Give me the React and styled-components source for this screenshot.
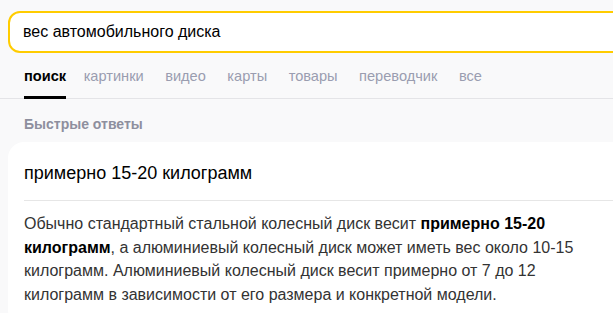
import React from 'react'
import styled, { createGlobalStyle } from 'styled-components'

const GlobalStyle = createGlobalStyle`
  html, body {
    margin: 0;
    padding: 0;
    background: #f9f9fa;
    overflow: hidden;
  }
  body {
    font-family: "Liberation Sans", Arial, sans-serif;
  }
`

const tabs = ['поиск', 'картинки', 'видео', 'карты', 'товары', 'переводчик', 'все']

function App() {
    return (
        <Page>
            <GlobalStyle />

            <SearchBox>
                <SearchText>вес автомобильного диска</SearchText>
                <ClearIcon viewBox="0 0 14 14">
                    <path d="M1 1 L13 13 M13 1 L1 13" />
                </ClearIcon>
            </SearchBox>

            <Tabs>
                {tabs.map((t, i) => (
                    <Tab key={t} active={i === 0}>{t}</Tab>
                ))}
            </Tabs>

            <SectionTitle>Быстрые ответы</SectionTitle>

            <Card>
                <AnswerTitle>примерно 15-20 килограмм</AnswerTitle>
                <Divider />
                <AnswerText>
                    Обычно стандартный стальной колесный диск весит <b>примерно 15-20 килограмм</b>, а алюминиевый колесный диск может иметь вес около 10-15 килограмм. Алюминиевый колесный диск весит примерно от 7 до 12 килограмм в зависимости от его размера и конкретной модели.
                </AnswerText>
            </Card>
        </Page>
    )
}

const Page = styled.div`
  width: 660px;
  padding: 11px 0 0 8px;
  display: flex;
  flex-direction: column;
`

const SearchBox = styled.div`
  height: 42px;
  box-sizing: border-box;
  border: 2px solid #ffcc00;
  border-radius: 12px;
  background: #fff;
  display: flex;
  align-items: center;
  padding: 0 14px 0 13px;
  justify-content: space-between;
`

const SearchText = styled.span`
  font-size: 16px;
  color: #000;
`

const ClearIcon = styled.svg`
  width: 12px;
  height: 12px;
  fill: none;
  stroke: #8a8fa3;
  stroke-width: 1.6;
`

const Tabs = styled.div`
  margin: 14px 0 0 -8px;
  padding-left: 24px;
  display: flex;
  gap: 21.5px;
  border-bottom: 1px solid #e4e4e7;
`

const Tab = styled.div`
  font-size: 14.6px;
  line-height: 18px;
  padding-bottom: 11px;
  border-bottom: 3px solid ${(p) => (p.active ? '#000' : 'transparent')};
  color: ${(p) => (p.active ? '#000' : '#9a9db0')};
  font-weight: ${(p) => (p.active ? 700 : 400)};
  margin-bottom: -1px;
  margin-right: ${(p) => (p.active ? '-4px' : '0')};
`

const SectionTitle = styled.div`
  margin: 17px 0 10px 16px;
  font-size: 14px;
  line-height: 16px;
  font-weight: 700;
  color: #8e8f9e;
`

const Card = styled.div`
  background: #fff;
  border-radius: 16px;
  padding: 19px 16px 20px;
`

const AnswerTitle = styled.div`
  font-size: 18px;
  line-height: 24px;
  color: #000;
`

const Divider = styled.div`
  height: 1px;
  background: #e6e6e6;
  margin-top: 15px;
`

const AnswerText = styled.p`
  margin: 11px 0 0;
  width: 560px;
  font-size: 16px;
  line-height: 23.5px;
  color: #333;

  b {
    color: #000;
  }
`

export default App
